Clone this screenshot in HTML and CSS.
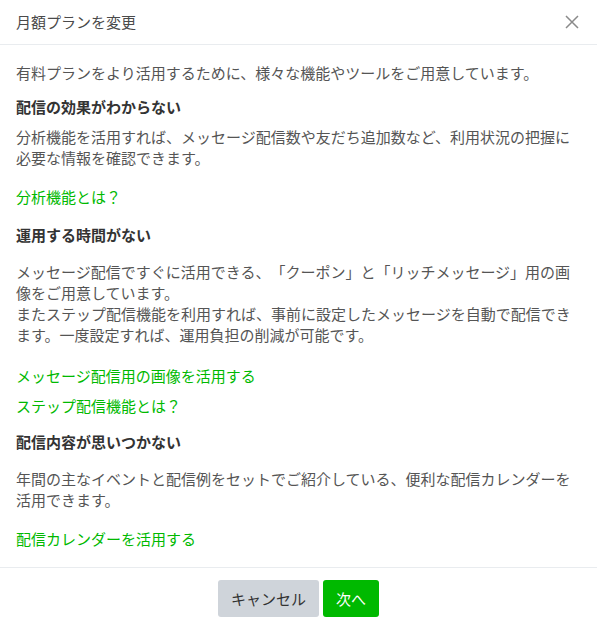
FILE: index.html
```html
<!DOCTYPE html>
<html lang="ja">
<head>
<meta charset="utf-8">
<link rel="stylesheet" href="styles.css">
</head>
<body>
<div class="modal">
  <div class="modal-header">
    <h5 class="modal-title">月額プランを変更</h5>
    <button class="close" type="button" aria-label="Close">
      <svg width="14" height="14" viewBox="0 0 14 14"><path d="M1 1L13 13M13 1L1 13" stroke="#8a8a8a" stroke-width="1.5" fill="none"/></svg>
    </button>
  </div>
  <div class="modal-body">
    <p class="lead">有料プランをより活用するために、様々な機能やツールをご用意しています。</p>

    <h6 class="sec sec-1">配信の効果がわからない</h6>
    <p class="desc desc-1">分析機能を活用すれば、メッセージ配信数や友だち追加数など、利用状況の把握に必要な情報を確認できます。</p>
    <a class="link link-a" href="#">分析機能とは？</a>

    <h6 class="sec sec-2">運用する時間がない</h6>
    <p class="desc desc-2">メッセージ配信ですぐに活用できる、「クーポン」と「リッチメッセージ」用の画像をご用意しています。<br>またステップ配信機能を利用すれば、事前に設定したメッセージを自動で配信できます。一度設定すれば、運用負担の削減が可能です。</p>
    <a class="link link-c" href="#">メッセージ配信用の画像を活用する</a>
    <a class="link link-b" href="#">ステップ配信機能とは？</a>

    <h6 class="sec sec-3">配信内容が思いつかない</h6>
    <p class="desc desc-2">年間の主なイベントと配信例をセットでご紹介している、便利な配信カレンダーを活用できます。</p>
    <a class="link link-a" href="#">配信カレンダーを活用する</a>
  </div>
  <div class="modal-footer">
    <button class="btn btn-cancel" type="button">キャンセル</button>
    <button class="btn btn-next" type="button">次へ</button>
  </div>
</div>
</body>
</html>
```
FILE: styles.css
```css
* { box-sizing: border-box; }
html, body { margin: 0; padding: 0; background: #fff; }
body {
  font-family: "Noto Sans CJK JP", "Noto Sans", sans-serif;
  font-size: 15px;
  line-height: 21px;
  color: #555;
  text-spacing-trim: space-all;
  line-break: strict;
}
.modal { width: 597px; background: #fff; }
.modal-header {
  height: 45px;
  display: flex;
  align-items: center;
  justify-content: space-between;
  padding: 0 16px;
  border-bottom: 1px solid #e9ecef;
}
.modal-title {
  margin: 0;
  font-size: 15px;
  font-weight: 400;
  color: #4a4a4a;
  line-height: 24px;
}
.close {
  border: 0;
  background: none;
  padding: 0;
  margin-right: 2px;
  width: 14px;
  height: 14px;
  display: flex;
}
.modal-body { padding: 17px 16px 18px; }
.modal-body p { margin: 0; }
.lead { margin-bottom: 13px !important; }
.sec {
  margin: 0;
  font-size: 15px;
  font-weight: 700;
  color: #333;
  line-height: 21px;
}
.desc-1 { margin-top: 9px !important; }
.desc-2 { margin-top: 16px !important; }
.sec-2 { margin-top: 17px; }
.sec-3 { margin-top: 15px; }
.link {
  display: block;
  color: #00b900;
  text-decoration: none;
  line-height: 21px;
}
.link-a { margin-top: 18px; }
.link-c { margin-top: 20px; }
.link-b { margin-top: 9px; }
.modal-footer {
  border-top: 1px solid #e9ecef;
  display: flex;
  justify-content: center;
  gap: 4px;
  padding: 12px 0;
}
.btn {
  font-family: inherit;
  font-size: 15px;
  line-height: 24px;
  border: 0;
  border-radius: 3px;
  height: 37px;
  padding: 0 13px;
  white-space: nowrap;
}
.btn-cancel { background: #cfd4da; color: #333; }
.btn-next { background: #00b900; color: #fff; }
```
